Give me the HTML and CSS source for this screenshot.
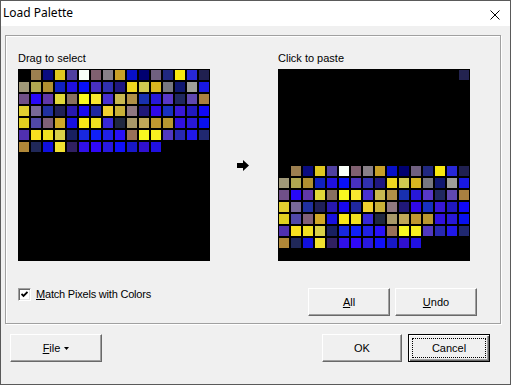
FILE: index.html
```html
<!DOCTYPE html>
<html>
<head>
<meta charset="utf-8">
<title>Load Palette</title>
<link rel="stylesheet" href="styles.css">
</head>
<body>
<div class="window">
  <div class="titlebar">
    <span class="title">Load Palette</span>
    <svg class="close" width="10" height="10" viewBox="0 0 10 10"><path d="M0.5 0.5L9.5 9.5M9.5 0.5L0.5 9.5" stroke="#000" stroke-width="1" fill="none"/></svg>
  </div>
  <div class="content">
    <div class="group">
      <div class="panels">
        <div class="label">Drag to select</div>
        <div></div>
        <div class="label">Click to paste</div>
        <div class="canvas" id="src"></div>
        <div class="arrow"><svg width="12" height="11" viewBox="0 0 12 11"><path d="M0 3H6V0L12 5.5L6 11V8H0Z" fill="#000"/></svg></div>
        <div class="canvas" id="dst"></div>
      </div>
      <div class="group-bottom">
        <div class="check">
          <span class="box"><svg width="7" height="7" viewBox="0 0 7 7"><path d="M0.5 3L2.5 5L6.5 1" stroke="#000" stroke-width="1.8" fill="none"/></svg></span>
          <span class="check-label"><u>M</u>atch Pixels with Colors</span>
        </div>
        <div class="btns">
          <button class="btn"><u>A</u>ll</button>
          <button class="btn"><u>U</u>ndo</button>
        </div>
      </div>
    </div>
    <div class="footer">
      <button class="btn file"><u>F</u>ile<svg class="tri" width="5" height="3" viewBox="0 0 5 3"><path d="M0 0H5L2.5 3Z" fill="#000"/></svg></button>
      <div class="spacer"></div>
      <button class="btn ok">OK</button>
      <button class="btn cancel"><span class="focus">Cancel</span></button>
    </div>
  </div>
</div>
<script src="app.js"></script>
</body>
</html>
```

FILE: styles.css
```css
html, body {
  margin: 0;
  padding: 0;
  background: #f0f0f0;
}
body {
  font-family: "Liberation Sans", Arial, sans-serif;
  font-size: 11px;
  color: #000;
}
.window {
  width: 511px;
  height: 385px;
  box-sizing: border-box;
  border: 1px solid #5a5a5a;
  background: #f0f0f0;
  display: flex;
  flex-direction: column;
}
.titlebar {
  height: 25px;
  background: #fff;
  display: flex;
  align-items: center;
  padding-left: 2px;
  flex: none;
}
.title {
  flex: 1;
  font-family: "Noto Sans", sans-serif;
  font-size: 12px;
  line-height: 24px;
  align-self: flex-start;
}
.close {
  margin-right: 10px;
  margin-top: 2px;
}
.content {
  padding: 9px 9px 0 4px;
  flex: 1;
  display: flex;
  flex-direction: column;
}
.group {
  height: 289px;
  box-sizing: border-box;
  border: 1px solid #a0a0a0;
  box-shadow: inset 1px 1px 0 #fff, 1px 1px 0 #fff;
}
.panels {
  display: grid;
  grid-template-columns: 192px 68px 192px;
  padding: 16px 0 0 12px;
}
.label {
  line-height: 13px;
  margin-bottom: 4px;
  white-space: nowrap;
}
.canvas {
  width: 192px;
  height: 192px;
  box-sizing: border-box;
  background: #000;
  padding: 1px;
  display: grid;
  grid-template-columns: repeat(16, 10px);
  grid-auto-rows: 10px;
  gap: 2px;
  align-content: start;
}
.canvas span {
  display: block;
  width: 10px;
  height: 10px;
}
.arrow {
  align-self: center;
  justify-self: center;
  margin-right: 2px;
  display: flex;
}
.group-bottom {
  display: flex;
  align-items: flex-start;
  justify-content: space-between;
  margin-top: 27px;
  padding: 0 23px 0 12px;
}
.check {
  display: flex;
  align-items: flex-start;
}
.box {
  width: 13px;
  height: 13px;
  box-sizing: border-box;
  background: #fff;
  border: 1px solid;
  border-color: #a0a0a0 #fff #fff #a0a0a0;
  box-shadow: inset 1px 1px 0 #696969, inset -1px -1px 0 #e3e3e3;
  display: flex;
  align-items: center;
  justify-content: center;
}
.check-label {
  line-height: 13px;
  margin-left: 5px;
  letter-spacing: -0.2px;
}
.btns {
  display: flex;
  gap: 5px;
}
.btn {
  box-sizing: border-box;
  width: 82px;
  height: 28px;
  padding: 0;
  margin: 0;
  background: #f0f0f0;
  border: 1px solid;
  border-color: #fff #696969 #696969 #fff;
  box-shadow: inset -1px -1px 0 #a0a0a0;
  font-family: "Liberation Sans", Arial, sans-serif;
  font-size: 11px;
  font-weight: 400;
  color: #000;
  display: flex;
  align-items: center;
  justify-content: center;
}
.footer {
  display: flex;
  align-items: flex-start;
  margin-top: 10px;
  padding: 0 11px 0 5px;
}
.spacer {
  flex: 1;
}
.file {
  width: 92px;
}
.tri {
  margin-left: 4px;
}
.ok {
  width: 80px;
  margin-right: 6px;
}
.cancel {
  width: 82px;
  border: 1px solid #000;
  box-shadow: inset 1px 1px 0 #fff, inset -1px -1px 0 #696969, inset -2px -2px 0 #a0a0a0;
  padding: 3px 3px 3px 3px;
  align-items: stretch;
}
.focus {
  flex: 1;
  border: 1px dotted #000;
  display: flex;
  align-items: center;
  justify-content: center;
}
```

FILE: app.js
```js
var L = [
  ['#000000','#9c7f50','#0a0c80','#e0c820','#5040a0','#f8fff8','#806070','#888088','#c8a028','#0810c8','#000070','#706080','#202880','#f8e810','#2828d8','#202050'],
  ['#a09878','#b0a850','#b09030','#1020c0','#2010e0','#0810f8','#4830c0','#3030b0','#201880','#f0d820','#d0c850','#d8b820','#787880','#101870','#a0a098','#1818e0'],
  ['#705088','#2808f8','#6038a8','#e0d838','#887060','#f8f820','#f8e830','#4830d0','#c8b850','#b09048','#1830b0','#2818d8','#5838c8','#202860','#6048b0','#a88040'],
  ['#e0d030','#786898','#2030a0','#202058','#2818b0','#1808f0','#2028a0','#f0d030','#c8b038','#907880','#201878','#3008e8','#1830c0','#3818d8','#2018c0','#1008f8'],
  ['#e0d020','#5048a8','#806078','#d0a828','#1810e0','#f8e818','#f0e020','#3828d8','#202840','#a89868','#c0a858','#c09830','#b89830','#3010e0','#2818d8','#0810f0'],
  ['#5030b0','#f8e020','#f0e020','#d8d048','#182060','#1828e0','#1020f8','#2020e8','#2810f8','#987058','#f8f820','#f8f020','#5038c0','#2828b0','#2018e8','#202870'],
  ['#b08838','#202858','#1010e0','#f0e030','#302060','#3010e8','#3008f8','#2818e0','#1010f8','#1818c8','#3010d0','#2010e0']
];
function fill(el, arr) {
  arr.forEach(function (c) {
    var s = document.createElement('span');
    s.style.background = c;
    el.appendChild(s);
  });
}
var flat = [];
L.forEach(function (r) { flat = flat.concat(r); });
fill(document.getElementById('src'), flat);
var right = [];
for (var i = 0; i < 15; i++) right.push('#000000');
right.push('#232350');
for (var j = 0; j < 112; j++) right.push('#000000');
fill(document.getElementById('dst'), right.concat(flat));
```
